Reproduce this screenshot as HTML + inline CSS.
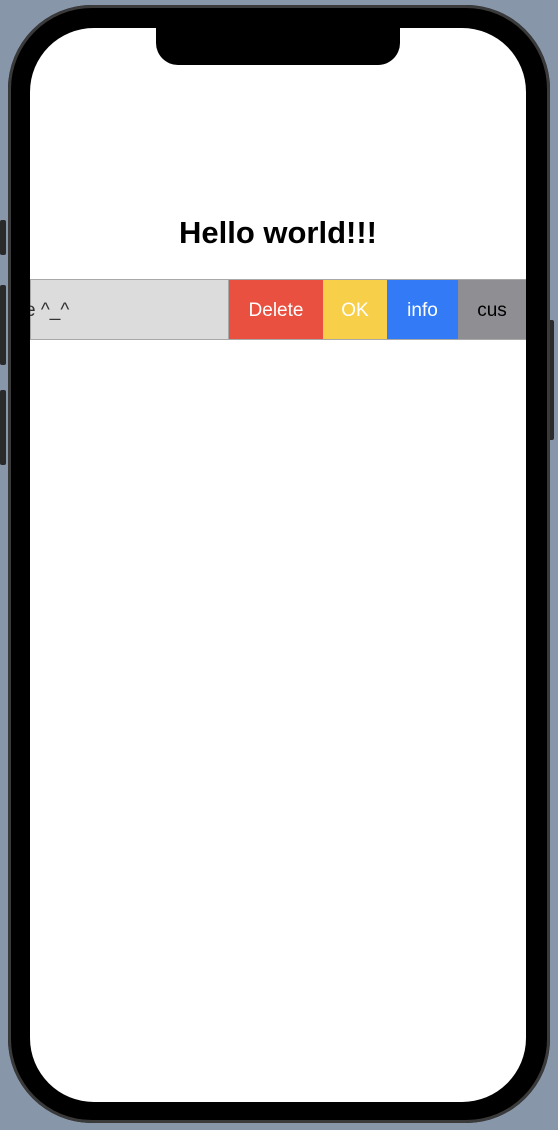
<!DOCTYPE html>
<html><head><style>
body{margin:0;width:558px;height:1130px;background:#8896aa;position:relative;overflow:hidden;font-family:"Liberation Sans",sans-serif}
.btn{position:absolute;background:#2a2a2a;border-radius:2px}
.phone{position:absolute;left:8px;top:5px;width:542px;height:1118px;border-radius:84px;background:#000;box-shadow:inset 0 0 0 3px #3a3a3a}
.screen{position:absolute;left:30px;top:28px;width:496px;height:1074px;border-radius:64px;background:#fff;overflow:hidden}
.notch{position:absolute;left:156px;top:20px;width:244px;height:45px;background:#000;border-radius:0 0 22px 22px}
h1{position:absolute;top:215px;left:30px;width:496px;text-align:center;margin:0;font-size:31px;font-weight:bold;color:#000}
.row{position:absolute;top:279px;left:30px;width:496px;height:61px;border-top:1px solid #a8a8a8;border-bottom:1px solid #a8a8a8;box-sizing:border-box;display:flex;font-size:19px;overflow:hidden}
.row div{height:100%;display:flex;align-items:center;justify-content:center;padding-top:3px;box-sizing:border-box}
</style></head><body>
<div class="btn" style="left:0;top:220px;width:6px;height:35px"></div>
<div class="btn" style="left:0;top:285px;width:6px;height:80px"></div>
<div class="btn" style="left:0;top:390px;width:6px;height:75px"></div>
<div class="btn" style="left:548px;top:320px;width:6px;height:120px"></div>
<div class="phone"></div>
<div class="screen"></div>
<div class="notch"></div>
<h1>Hello world!!!</h1>
<div class="row">
<div style="width:199px;background:#dcdcdc;justify-content:flex-start;color:#333;border-left:1px solid #a8a8a8;border-right:1px solid #a8a8a8"><span style="margin-left:-6px">e ^_^</span></div>
<div style="width:94px;background:#ea5040;color:#fff">Delete</div>
<div style="width:64px;background:#f8cf48;color:#fff">OK</div>
<div style="width:71px;background:#337bf6;color:#fff">info</div>
<div style="width:68px;background:#8f8e93;color:#000">cus</div>
</div>
</body></html>
